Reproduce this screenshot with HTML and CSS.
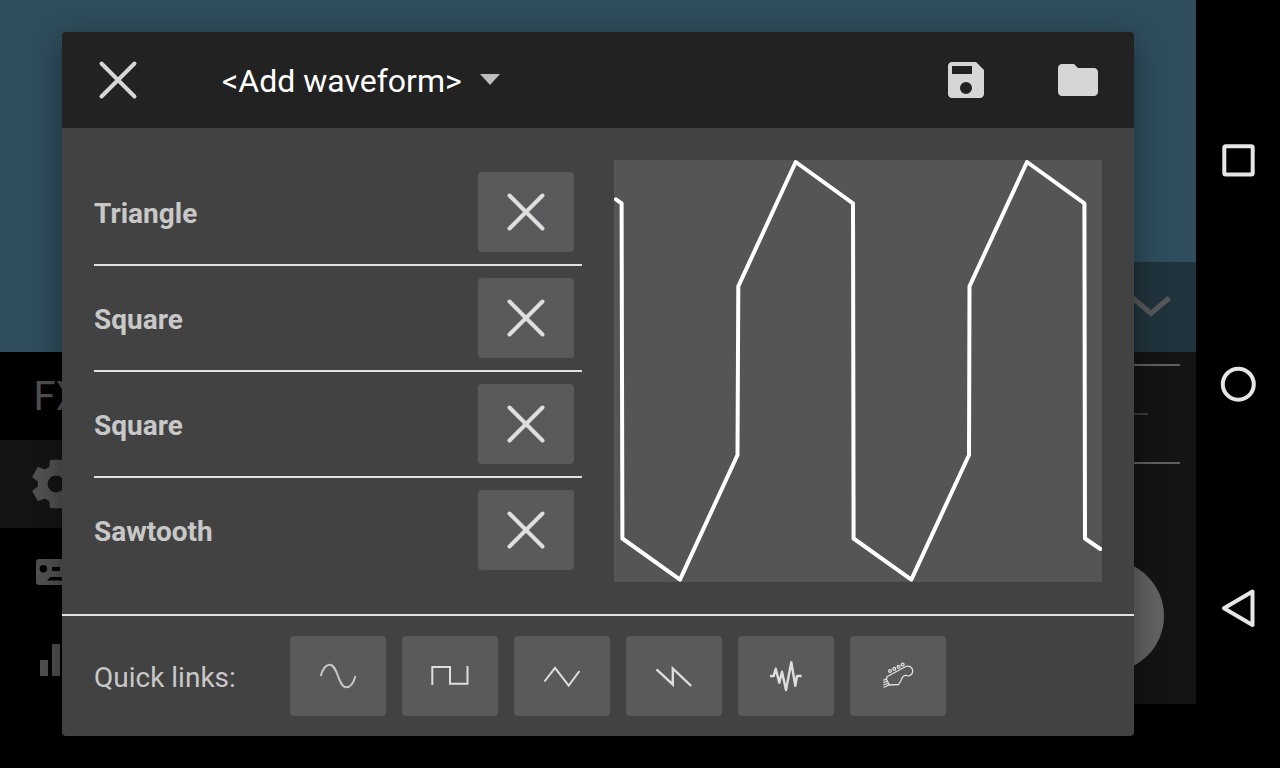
FILE: index.html
```html
<!DOCTYPE html>
<html lang="en">
<head>
<meta charset="utf-8">
<meta name="viewport" content="width=device-width, initial-scale=1">
<title>Add waveform</title>
<link rel="stylesheet" href="styles.css">
</head>
<body>
<div class="screen">
  <div class="app">
    <div class="stage">
      <button class="drawer" type="button" aria-label="Collapse">
        <svg width="48" height="48" viewBox="0 0 48 48"><path class="chevron" d="M5.800 15 24 30.500 42.200 15"/></svg>
      </button>
    </div>
    <div class="workspace">
      <nav class="tabs">
        <button class="tab" type="button">FX</button>
        <button class="tab tab-active" type="button" aria-label="Settings">
          <svg width="58" height="58" viewBox="0 0 24 24"><path d="M19.430 12.980c.04-.32.07-.64.07-.98s-.03-.66-.07-.98l2.110-1.650c.19-.15.24-.42.12-.64l-2-3.460c-.12-.22-.39-.3-.61-.22l-2.490 1c-.52-.4-1.080-.73-1.690-.98l-.38-2.650C14.460 2.180 14.250 2 14 2h-4c-.25 0-.46.18-.49.42l-.38 2.650c-.61.25-1.170.59-1.690.98l-2.490-1c-.23-.09-.49 0-.61.22l-2 3.460c-.13.22-.07.49.12.64l2.110 1.650c-.04.32-.07.65-.07.98s.03.66.07.98l-2.110 1.650c-.19.15-.24.42-.12.64l2 3.460c.12.22.39.3.61.22l2.490-1c.52.4 1.080.73 1.690.98l.38 2.650c.03.24.24.42.49.42h4c.25 0 .46-.18.49-.42l.38-2.650c.61-.25 1.170-.59 1.690-.98l2.490 1c.23.09.49 0 .61-.22l2-3.460c.12-.22.07-.49-.12-.64l-2.110-1.650zM12 15.500a3.500 3.500 0 1 1 0-7 3.500 3.500 0 0 1 0 7z"/></svg>
        </button>
        <button class="tab" type="button" aria-label="Keyboard">
          <svg width="40" height="26" viewBox="0 0 40 26"><path fill-rule="evenodd" d="M3 0h34a3 3 0 0 1 3 3v20a3 3 0 0 1-3 3H3a3 3 0 0 1-3-3V3a3 3 0 0 1 3-3zM7.300 6a3.700 3.700 0 1 0 0 7.400 3.700 3.700 0 0 0 0-7.400zM16 8h8v4h-8zM14.500 18 11 21.500h18L25.500 18zM32.700 6a3.700 3.700 0 1 0 0 7.400 3.700 3.700 0 0 0 0-7.400z"/></svg>
        </button>
        <button class="tab" type="button" aria-label="Levels">
          <svg width="32" height="32" viewBox="0 0 32 32"><path d="M0 16h8v16H0zM12 0h8v32h-8zM24 8h8v24h-8z"/></svg>
        </button>
      </nav>
      <div class="panel">
        <div class="field"><div class="field-line"></div></div>
        <button class="knob" type="button" aria-label="Play"></button>
      </div>
    </div>
  </div>

  <nav class="system" aria-label="System">
    <button class="system-key" type="button" aria-label="Recent apps"><svg width="40" height="40" viewBox="0 0 40 40"><rect x="6.300" y="6.200" width="28.400" height="28.400" rx="1.500"/></svg></button>
    <button class="system-key" type="button" aria-label="Home"><svg width="40" height="40" viewBox="0 0 40 40"><circle cx="20.300" cy="20.200" r="15.500"/></svg></button>
    <button class="system-key" type="button" aria-label="Back"><svg width="40" height="40" viewBox="0 0 40 40"><path d="M6 20.300 34.500 3.500V37z"/></svg></button>
  </nav>

  <section class="dialog" role="dialog" aria-label="Waveform editor">
    <header class="bar">
      <button class="bar-button" type="button" aria-label="Close"><svg width="48" height="48" viewBox="0 0 48 48"><path class="cross" d="M7.500 7.500l33 33M40.500 7.500l-33 33"/></svg></button>
      <div class="picker">
        <select class="picker-select" aria-label="Add waveform"><option>&lt;Add waveform&gt;</option></select>
        <svg class="picker-arrow" width="20" height="14" viewBox="0 0 20 14"><path d="M0 1h20L10 12z"/></svg>
      </div>
      <button class="bar-button" type="button" aria-label="Save"><svg width="48" height="48" viewBox="0 0 24 24"><path d="M17 3H5c-1.110 0-2 .9-2 2v14c0 1.100.89 2 2 2h14c1.100 0 2-.9 2-2V7l-4-4zm-5 16a3 3 0 1 1 0-6 3 3 0 0 1 0 6zm3-10H5V5h10v4z"/></svg></button>
      <button class="bar-button" type="button" aria-label="Open"><svg width="48" height="48" viewBox="0 0 24 24"><path d="M10 4H4c-1.100 0-1.990.9-1.990 2L2 18c0 1.100.9 2 2 2h16c1.100 0 2-.9 2-2V8c0-1.100-.9-2-2-2h-8l-2-2z"/></svg></button>
    </header>

    <div class="content">
      <ul class="waves">
        <li class="wave"><span class="label">Triangle</span><button class="key" type="button" aria-label="Remove Triangle"><svg width="48" height="48" viewBox="0 0 48 48"><path class="cross" d="M7.500 7.500l33 33M40.500 7.500l-33 33"/></svg></button></li>
        <li class="wave"><span class="label">Square</span><button class="key" type="button" aria-label="Remove Square"><svg width="48" height="48" viewBox="0 0 48 48"><path class="cross" d="M7.500 7.500l33 33M40.500 7.500l-33 33"/></svg></button></li>
        <li class="wave"><span class="label">Square</span><button class="key" type="button" aria-label="Remove Square"><svg width="48" height="48" viewBox="0 0 48 48"><path class="cross" d="M7.500 7.500l33 33M40.500 7.500l-33 33"/></svg></button></li>
        <li class="wave"><span class="label">Sawtooth</span><button class="key" type="button" aria-label="Remove Sawtooth"><svg width="48" height="48" viewBox="0 0 48 48"><path class="cross" d="M7.500 7.500l33 33M40.500 7.500l-33 33"/></svg></button></li>
      </ul>
      <div class="plot">
        <svg class="plot-image" viewBox="0 0 488 422" preserveAspectRatio="none" role="img" aria-label="Combined waveform"><polyline points="2,39.300 7.600,43.300 8.400,378.500 66,419.700 123.500,295 124.300,126.300 181.700,2 239,43.300 239.600,378.500 297.300,419.700 355,295 355.500,126.300 413,2 470.400,43.300 471,378.500 486.300,389"/></svg>
      </div>
    </div>

    <footer class="links">
      <span class="label links-label">Quick links:</span>
      <button class="key" type="button" aria-label="Sine"><svg class="glyph glyph-soft" width="48" height="48" viewBox="0 0 48 48"><path d="M6.700 24C9 16 12 12.700 15.700 12.700 24 12.700 24 35.300 32.300 35.300 37 35.300 39.500 31 41.500 24"/></svg></button>
      <button class="key" type="button" aria-label="Square"><svg class="glyph" width="48" height="48" viewBox="0 0 48 48"><path d="M6.300 33V15H24V31.700H41.500V14"/></svg></button>
      <button class="key" type="button" aria-label="Triangle"><svg class="glyph" width="48" height="48" viewBox="0 0 48 48"><path d="M6.500 29.500 17 16 30.700 33.500 41.500 19"/></svg></button>
      <button class="key" type="button" aria-label="Sawtooth"><svg class="glyph glyph-bold" width="48" height="48" viewBox="0 0 48 48"><path d="M6.500 17.300 22.800 32.500V16.500L41.200 34"/></svg></button>
      <button class="key" type="button" aria-label="Noise"><svg class="glyph glyph-bold glyph-round" width="48" height="48" viewBox="0 0 48 48"><path d="M8 24h3.700l2-7.300 3.600 14 2.700-11 4 18.300 5.300-27.800 4 23.500 1.700-9.700h4.700"/></svg></button>
      <button class="key" type="button" aria-label="Guitar"><svg class="glyph glyph-fine" width="48" height="48" viewBox="0 0 48 48"><path d="M13.300 24.500 31 15C35 12.800 38.700 15.500 38.700 19 38.700 22.500 35.500 24.500 32.500 23.500 30 23 28 25.500 27 28.500L24.500 32.500 15.500 33 12.300 27.300zM9.300 28.300 13 26.700M9.300 30.700 14 29M9.300 33 15 31M9.500 35.500 15.500 32.700"/><circle cx="16" cy="19" r="1.400"/><circle cx="20.300" cy="16.900" r="1.400"/><circle cx="24.600" cy="14.800" r="1.400"/><circle cx="28.700" cy="12.600" r="1.400"/></svg></button>
    </footer>
  </section>
</div>
</body>
</html>
```
FILE: styles.css
```css
* {
  box-sizing: border-box;
}

body {
  margin: 0;
  background: #000;
  color: #c8c8c8;
  font-family: Roboto, "Liberation Sans", sans-serif;
  font-size: 28px;
  line-height: 36px;
}

button {
  display: flex;
  align-items: center;
  justify-content: center;
  margin: 0;
  padding: 0;
  border: 0;
  background: none;
  color: inherit;
  font: inherit;
}

svg {
  display: block;
  flex: none;
  fill: currentColor;
}

.screen {
  position: relative;
  display: grid;
  grid-template-columns: 1fr 84px;
  min-height: 100vh;
}

/* App behind the dialog */
.app {
  display: flex;
  flex-direction: column;
  padding-bottom: 64px;
}

.stage {
  display: flex;
  flex: 1;
  align-items: flex-end;
  justify-content: flex-end;
  background: #2f4d5d;
}

.drawer {
  width: 90px;
  height: 90px;
  background: #20333c;
  color: #56595b;
}

.chevron {
  fill: none;
  stroke: currentColor;
  stroke-width: 5;
}

.workspace {
  display: flex;
}

.tabs {
  flex: none;
  width: 112px;
  color: #515151;
}

.tab {
  width: 100%;
  height: 88px;
  padding: 2px 0 0 2px;
  font-size: 40px;
}

.tab svg {
  margin: -2px 0 0 -2px;
}

.tab-active {
  background: #141414;
}

.panel {
  display: flex;
  flex: 1;
  flex-direction: column;
  align-items: flex-end;
  justify-content: space-between;
  padding: 12px 16px 32px;
  background: #141414;
}

.field {
  width: 100%;
  height: 100px;
  padding: 47px 32px;
  border-top: 2px solid #5f5f5f;
  border-bottom: 2px solid #5f5f5f;
}

.field-line {
  height: 2px;
  background: #3a3a3a;
}

.knob {
  width: 112px;
  height: 112px;
  margin-right: 16px;
  border-radius: 50%;
  background: #636363;
}

/* System keys */
.system {
  display: flex;
  flex-direction: column;
  justify-content: center;
  background: #000;
  color: #e6e6e6;
}

.system-key {
  height: 224px;
}

.system-key svg {
  fill: none;
  stroke: currentColor;
  stroke-width: 4;
  stroke-linejoin: round;
}

/* Dialog */
.dialog {
  position: absolute;
  inset: 32px 146px 32px 62px;
  display: flex;
  flex-direction: column;
  overflow: hidden;
  border-radius: 4px;
  background: #424242;
  box-shadow: 0 8px 32px rgba(0, 0, 0, 0.4);
}

.bar {
  display: flex;
  flex: none;
  height: 96px;
  background: #222;
  color: #d6d6d6;
}

.bar-button {
  flex: none;
  width: 112px;
}

.cross {
  fill: none;
  stroke: currentColor;
  stroke-width: 4;
  stroke-linecap: round;
}

.picker {
  display: flex;
  flex: 1;
  align-items: center;
  margin-left: 48px;
}

.picker-select {
  width: 278px;
  height: 48px;
  padding: 2px 0 0;
  border: 0;
  appearance: none;
  background: transparent;
  color: #fff;
  font: 32px/40px Roboto, "Liberation Sans", sans-serif;
}

.picker-arrow {
  margin-left: -20px;
  color: #bdbdbd;
  pointer-events: none;
}

.content {
  display: grid;
  flex: 1;
  grid-template-columns: 1fr 1fr;
  gap: 32px;
  padding: 32px;
}

.label {
  padding-top: 4px;
}

.waves {
  margin: 0;
  padding: 0;
  list-style: none;
}

.wave {
  display: flex;
  align-items: center;
  justify-content: space-between;
  padding: 12px 8px 12px 0;
  font-weight: 700;
}

.wave + .wave {
  border-top: 2px solid #e0e0e0;
}

.key {
  flex: none;
  width: 96px;
  height: 80px;
  border-radius: 4px;
  background: #5a5a5c;
  color: #dedede;
}

.plot {
  background: #555;
}

.plot-image {
  width: 100%;
  height: 100%;
  fill: none;
  stroke: #fff;
  stroke-width: 4;
  stroke-linecap: round;
  stroke-linejoin: round;
}

.links {
  display: flex;
  flex: none;
  align-items: center;
  gap: 16px;
  padding: 20px 32px;
  border-top: 2px solid #e0e0e0;
}

.links-label {
  flex: none;
  width: 180px;
}

.glyph {
  fill: none;
  stroke: currentColor;
  stroke-width: 2;
}

.glyph-soft {
  color: #c6c6c6;
}

.glyph-bold {
  stroke-width: 2.4;
}

.glyph-round {
  stroke-linejoin: round;
}

.glyph-fine {
  stroke-width: 1.3;
}
```
